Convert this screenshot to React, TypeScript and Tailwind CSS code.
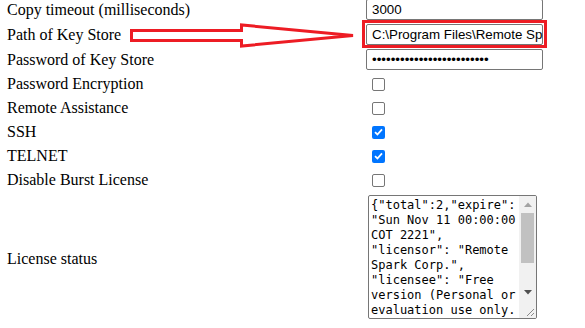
import React from "react";

const checkRows: { label: string; checked: boolean }[] = [
  { label: "Password Encryption", checked: false },
  { label: "Remote Assistance", checked: false },
  { label: "SSH", checked: true },
  { label: "TELNET", checked: true },
  { label: "Disable Burst License", checked: false },
];

const licenseLines = [
  '{"total":2,"expire":',
  '"Sun Nov 11 00:00:00',
  'COT 2221",',
  '"licensor": "Remote',
  'Spark Corp.",',
  '"licensee": "Free',
  "version (Personal or",
  "evaluation use only.",
];

function Checkbox({ checked }: { checked: boolean }) {
  if (checked) {
    return (
      <span className="ml-[6px] flex h-[13px] w-[13px] items-center justify-center rounded-[2px] bg-[#0075ff]">
        <svg width="9" height="8" viewBox="0 0 9 8">
          <path d="M1 4.2 L3.4 6.5 L8 1.3" fill="none" stroke="white" strokeWidth="1.8" />
        </svg>
      </span>
    );
  }
  return <span className="ml-[6px] block h-[13px] w-[13px] rounded-[2px] border border-[#767676] bg-white" />;
}

function Scrollbar() {
  return (
    <div className="flex w-[17px] flex-none flex-col bg-[#f1f1f1]">
      <div className="flex h-[17px] items-center justify-center">
        <svg width="8" height="5" viewBox="0 0 8 5">
          <path d="M0 5 L4 0.5 L8 5 Z" fill="#a3a3a3" />
        </svg>
      </div>
      <div className="mx-[2px] h-[50px] bg-[#c1c1c1]" />
      <div className="flex-1" />
      <div className="flex h-[17px] items-center justify-center">
        <svg width="8" height="5" viewBox="0 0 8 5">
          <path d="M0 0 L4 4.5 L8 0 Z" fill="#505050" />
        </svg>
      </div>
      <div className="h-[17px]">
        <svg width="17" height="17" viewBox="0 0 17 17">
          <path d="M15 8 L8 15 M15 12 L12 15" stroke="#8a8a8a" strokeWidth="1" />
        </svg>
      </div>
    </div>
  );
}

export default function App() {
  return (
    <div className="relative h-[328px] w-[585px] overflow-hidden bg-white font-['Liberation_Serif',serif] text-[16px] text-black">
      <div className="-mt-[3px] flex flex-col pl-[7px]">
        <div className="flex h-[25px] items-center">
          <div className="w-[359px]">Copy timeout (milliseconds)</div>
          <div className="flex h-[21px] w-[177px] items-center rounded-[2px] border border-[#767676] pl-[5px] font-['Liberation_Sans',sans-serif] text-[13.33px]">
            3000
          </div>
        </div>
        <div className="flex h-[25px] items-center">
          <div className="w-[359px]">Path of Key Store</div>
          <div className="flex h-[21px] w-[177px] items-center whitespace-nowrap rounded-[2px] border border-[#767676] pl-[5px] font-['Liberation_Sans',sans-serif] text-[13.33px]">
            C:\Program Files\Remote Sp
          </div>
        </div>
        <div className="flex h-[25px] items-center">
          <div className="w-[359px]">Password of Key Store</div>
          <div className="flex h-[21px] w-[177px] items-center overflow-hidden whitespace-nowrap rounded-[2px] border border-[#767676] pl-[5px] font-['Liberation_Sans',sans-serif] text-[13.33px]">
            {"•".repeat(25)}
          </div>
        </div>
        {checkRows.map((row) => (
          <div key={row.label} className="flex h-[24px] items-center">
            <div className="w-[359px]">{row.label}</div>
            <Checkbox checked={row.checked} />
          </div>
        ))}
        <div className="flex h-[134px] items-center">
          <div className="w-[359px]">License status</div>
          <div className="mt-[3px] ml-[2px] flex h-[124px] w-[169px] self-start overflow-hidden rounded-[2px] border border-[#767676]">
            <div className="flex-1 overflow-hidden whitespace-pre pl-[2px] pt-[2px] font-['DejaVu_Sans_Mono',monospace] text-[12px] leading-[15px]">
              {licenseLines.join("\n")}
            </div>
            <Scrollbar />
          </div>
        </div>
      </div>

      {/* annotation drawn over the form */}
      <div className="absolute left-[362px] top-[20px] h-[28px] w-[185px] border-[3px] border-[#ed1c24]" />
      <svg className="absolute left-0 top-0" width="585" height="328" viewBox="0 0 585 328">
        <polygon
          points="131.5,30.5 241.5,30.5 241.5,25 353,35.5 241.5,46 241.5,40.5 131.5,40.5"
          fill="none"
          stroke="#ed1c24"
          strokeWidth="3"
        />
      </svg>
    </div>
  );
}
